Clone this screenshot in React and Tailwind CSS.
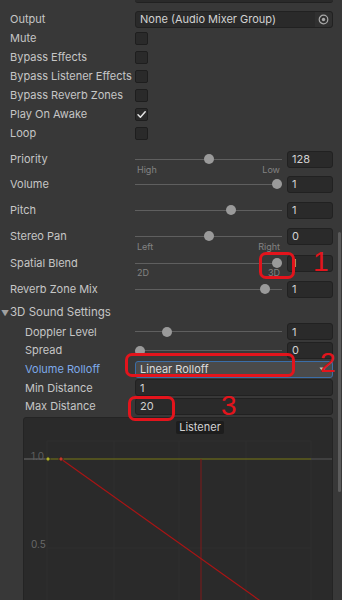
import React from 'react';

const FONT = "font-['Inter','Noto_Sans',sans-serif]";

function Field({ children, className = '' }) {
  return (
    <div className={`h-[17px] rounded-[3px] bg-[#2a2a2a] border border-[#212121] flex items-center pl-[4px] text-[#d2d2d2] ${className}`}>
      {children}
    </div>
  );
}

function Check({ on }) {
  return (
    <div className="w-[13px] h-[13px] rounded-[2px] bg-[#2a2a2a] border border-[#1e1e1e] flex items-center justify-center">
      {on && (
        <svg width="11" height="11" viewBox="0 0 11 11">
          <path d="M2 5.8 L4.4 8.2 L9.2 2.8" fill="none" stroke="#e4e4e4" strokeWidth="1.5" strokeLinecap="round" strokeLinejoin="round" />
        </svg>
      )}
    </div>
  );
}

function Row({ label, indent, blue, h = 'h-[19px]', className = '', children }) {
  return (
    <div className={`flex items-center ${h} ${className}`}>
      <div className={`w-[135px] shrink-0 whitespace-nowrap ${indent ? 'pl-[25px]' : 'pl-[10px]'} ${blue ? 'text-[#7eaaea]' : ''}`}>
        {label}
      </div>
      <div className="flex-1 mr-[9px] flex items-center">{children}</div>
    </div>
  );
}

function Slider({ t, value }) {
  // thumb travels from x=5 to x=142 inside the 147px track
  const left = 5 + t * 137;
  return (
    <div className="flex items-center w-full">
      <div className="relative w-[147px] h-[17px] shrink-0">
        <div className="absolute left-0 right-0 top-[8px] h-[1px] bg-[#5f5f5f]" />
        <div className="absolute top-[3.5px] w-[10px] h-[10px] rounded-full bg-[#9a9a9a]" style={{ left: left - 5 }} />
      </div>
      <Field className="ml-[5px] flex-1">{value}</Field>
    </div>
  );
}

function SubLabels({ left, right, className = '' }) {
  return (
    <div className={`flex h-[10px] leading-[10px] text-[9px] text-[#838383] ${className}`}>
      <div className="w-[137px] shrink-0" />
      <div className="w-[143px] flex justify-between">
        <span>{left}</span>
        <span>{right}</span>
      </div>
    </div>
  );
}

function RolloffGraph() {
  return (
    <div className="relative ml-[23px] w-[310px] h-[190px] mt-[1px] bg-[#2a2a2a] border border-[#242424] rounded-t-[3px] overflow-hidden">
      <svg width="310" height="190" className="block">
        {[23, 90, 155, 222, 287].map((x) => (
          <line key={x} x1={x} y1="23" x2={x} y2="190" stroke="#2f2f2f" strokeWidth="1" />
        ))}
        <line x1="23" y1="23" x2="287" y2="23" stroke="#2f2f2f" />
        <line x1="23" y1="130" x2="287" y2="130" stroke="#2f2f2f" />
        <line x1="0" y1="41" x2="23" y2="41" stroke="#6c6c6c" strokeWidth="1.2" />
        <line x1="23" y1="41" x2="287" y2="41" stroke="#5f5f1d" strokeWidth="1.4" />
        <line x1="287" y1="41" x2="310" y2="41" stroke="#575757" strokeWidth="1.2" />
        <line x1="177" y1="41" x2="177" y2="190" stroke="#801818" strokeWidth="1" />
        <line x1="37" y1="41" x2="287" y2="219" stroke="#a81515" strokeWidth="1.2" />
        <path d="M24 38.5 L26.5 41 L24 43.5 L21.5 41 Z" fill="#b0b02a" stroke="#1e1e1e" strokeWidth="0.8" />
        <path d="M37 38.5 L39.5 41 L37 43.5 L34.5 41 Z" fill="#c8382a" stroke="#1e1e1e" strokeWidth="0.8" />
        <text x="7" y="42" fontSize="10" fill="#5e5e5e" fontFamily="Inter, sans-serif">1.0</text>
        <text x="7" y="130" fontSize="10" fill="#686868" fontFamily="Inter, sans-serif">0.5</text>
      </svg>
      <div className="absolute left-[152px] top-[3px] w-[48px] h-[13px] rounded-[2px] bg-[#1d1d1d] text-[11px] leading-[13px] text-center text-[#d2d2d2]">
        Listener
      </div>
    </div>
  );
}

export default function App() {
  return (
    <div className={`relative w-[342px] h-[600px] overflow-hidden bg-[#383838] text-[11px] text-[#c6c6c6] ${FONT}`}>
      <div className="h-[3px] ml-[135px] w-[198px] bg-[#2a2a2a] rounded-b-[3px] border-b border-[#212121]" />

      <div className="mt-[7px]">
        <Row label="Output">
          <Field className="w-full justify-between">
            <span>None (Audio Mixer Group)</span>
            <span className="w-[17px] h-full flex items-center justify-center bg-[#303030] rounded-r-[3px]">
              <svg width="11" height="11" viewBox="0 0 11 11">
                <circle cx="5.5" cy="5.5" r="4.3" fill="none" stroke="#a8a8a8" strokeWidth="1.2" />
                <circle cx="5.5" cy="5.5" r="1.7" fill="#a8a8a8" />
              </svg>
            </span>
          </Field>
        </Row>
        <Row label="Mute"><Check /></Row>
        <Row label="Bypass Effects"><Check /></Row>
        <Row label="Bypass Listener Effects"><Check /></Row>
        <Row label="Bypass Reverb Zones"><Check /></Row>
        <Row label="Play On Awake"><Check on /></Row>
        <Row label="Loop"><Check /></Row>
      </div>

      <Row label="Priority" h="h-[18px]" className="mt-[7px]"><Slider t={0.5} value="128" /></Row>
      <SubLabels left="High" right="Low" className="-mt-[3px]" />
      <Row label="Volume" h="h-[18px]"><Slider t={1} value="1" /></Row>
      <Row label="Pitch" h="h-[18px]" className="mt-[8px]"><Slider t={0.667} value="1" /></Row>
      <Row label="Stereo Pan" h="h-[18px]" className="mt-[8px]"><Slider t={0.5} value="0" /></Row>
      <SubLabels left="Left" right="Right" className="-mt-[3px]" />
      <Row label="Spatial Blend" h="h-[18px]" className="mt-[2px]"><Slider t={1} value="1" /></Row>
      <SubLabels left="2D" right="3D" className="-mt-[4px]" />
      <Row label="Reverb Zone Mix" h="h-[18px]" className="mt-[2px]"><Slider t={0.909} value="1" /></Row>

      <div className="flex items-center h-[18px] mt-[6px] text-[11.5px]">
        <span className="w-[10px] text-[8px] text-[#a0a0a0] pl-[1px]">▼</span>
        <span>3D Sound Settings</span>
      </div>

      <div className="mt-[0.5px]">
        <Row label="Doppler Level" indent h="h-[18.7px]"><Slider t={0.2} value="1" /></Row>
        <Row label="Spread" indent h="h-[18.7px]"><Slider t={0} value="0" /></Row>
        <Row label="Volume Rolloff" indent blue h="h-[18.7px]">
          <div className="h-[17px] w-full rounded-[3px] bg-[#4a4a4a] border border-[#3b6ea8] flex items-center justify-between pl-[4px] pr-[6px] text-[#dcdcdc]">
            <span>Linear Rolloff</span>
            <svg width="7" height="5" viewBox="0 0 7 5"><path d="M0.5 0.5 L6.5 0.5 L3.5 4.5 Z" fill="#c8c8c8" /></svg>
          </div>
        </Row>
        <Row label="Min Distance" indent h="h-[18.7px]"><Field className="w-full">1</Field></Row>
        <Row label="Max Distance" indent h="h-[18.7px]"><Field className="w-full">20</Field></Row>
      </div>

      <RolloffGraph />

      {/* scrollbar */}
      <div className="absolute left-[338px] top-[232px] w-[3px] h-[260px] rounded-full bg-[#5c5c5c]" />

      {/* red annotations */}
      <div className="absolute left-[259px] top-[252px] w-[36px] h-[27px] border-[3px] border-[#e3141c] rounded-[7px]" />
      <div className="absolute left-[313px] top-[245px] text-[28px] leading-[34px] text-[#e3141c] font-['Liberation_Sans',sans-serif]">1</div>
      <div className="absolute left-[125px] top-[353px] w-[170px] h-[24px] border-[3px] border-[#e3141c] rounded-[7px]" />
      <div className="absolute left-[320px] top-[346px] text-[28px] leading-[34px] text-[#e3141c] font-['Liberation_Sans',sans-serif]">2</div>
      <div className="absolute left-[128px] top-[396px] w-[47px] h-[25px] border-[3px] border-[#e3141c] rounded-[7px]" />
      <div className="absolute left-[221px] top-[389px] text-[28px] leading-[34px] text-[#e3141c] font-['Liberation_Sans',sans-serif]">3</div>
    </div>
  );
}
